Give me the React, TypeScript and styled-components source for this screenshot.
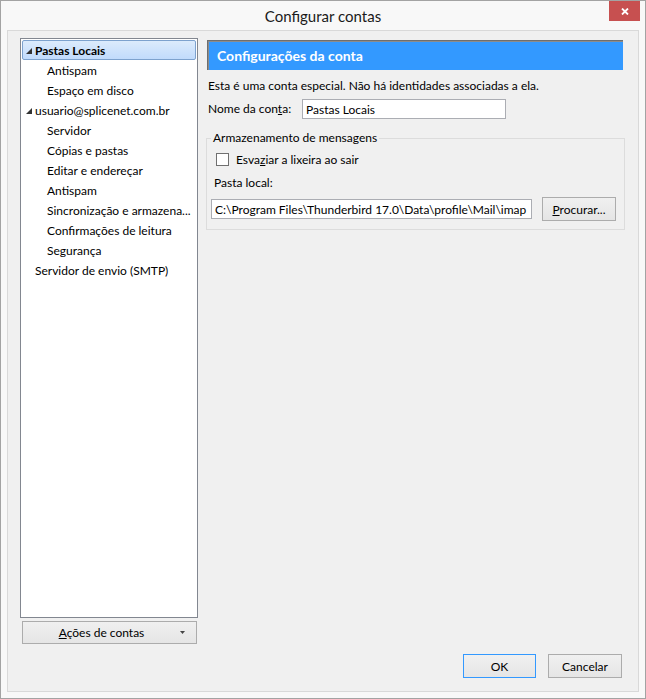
import React from "react";
import styled, { createGlobalStyle } from "styled-components";

const GlobalStyle = createGlobalStyle`
  html, body { margin: 0; padding: 0; background: #ffffff; }
  body { font-family: Lato, "Noto Sans", sans-serif; font-size: 12px; color: #000; }
  * { box-sizing: border-box; }
`;

const Window = styled.div`
  width: 646px;
  height: 699px;
  border: 1px solid #a3a3a3;
  background: #f8f8f8;
  display: flex;
  flex-direction: column;
  padding: 0 6px 6px 6px;
`;

const TitleBar = styled.div`
  height: 29px;
  flex: none;
  display: grid;
  grid-template-columns: 1fr auto 1fr;
  align-items: center;
`;

const Title = styled.div`
  grid-column: 2;
  font-size: 15px;
  line-height: 20px;
  color: #1a1a1a;
`;

const CloseButton = styled.div`
  grid-column: 3;
  justify-self: end;
  align-self: start;
  width: 31px;
  height: 20px;
  margin-right: -1px;
  background: #c75050;
  display: flex;
  justify-content: center;
  padding-top: 7px;
`;

const Frame = styled.div`
  flex: 1;
  border: 1px solid #d9d9d9;
  background: #f0f0f0;
  display: grid;
  grid-template-columns: 178px 1fr;
  column-gap: 8px;
  padding: 7px 13px 13px 12px;
  min-height: 0;
`;

const LeftColumn = styled.div`
  display: flex;
  flex-direction: column;
  min-height: 0;
`;

const Tree = styled.div`
  flex: 1;
  border: 1px solid #828790;
  background: #fff;
  padding: 1px;
`;

const TreeRow = styled.div<{ $level: number; $selected?: boolean }>`
  height: 20px;
  border: 1px solid ${(p) => (p.$selected ? "#7da2ce" : "transparent")};
  border-radius: 2px;
  background: ${(p) => (p.$selected ? "linear-gradient(#dcebfc, #c1dbfc)" : "transparent")};
  font-weight: ${(p) => (p.$selected ? 700 : 400)};
  display: flex;
  align-items: center;
  padding-left: ${(p) => 3 + p.$level * 12}px;
  white-space: nowrap;
`;

const Expander = styled.span`
  width: 9px;
  flex: none;
  display: flex;
  align-items: center;
  padding-top: 1px;
`;

const DropButton = styled.button`
  height: 23px;
  margin: 3px 1px 34px 2px;
  padding: 0 11px 0 0;
  font: inherit;
  color: #000;
  border: 1px solid #acacac;
  background: linear-gradient(#f0f0f0, #e5e5e5);
  display: flex;
  align-items: center;
`;

const DropLabel = styled.span`
  flex: 1;
  text-align: center;
`;

const RightColumn = styled.div`
  display: flex;
  flex-direction: column;
  min-width: 0;
`;

const Header = styled.div`
  margin: 2px 2px 0 1px;
  height: 30px;
  flex: none;
  background: #3399ff;
  border-top: 1px solid #6e6e6e;
  border-left: 1px solid #6e6e6e;
  box-shadow: inset 1px 1px 0 #8c8c8c;
  color: #fff;
  font-weight: 700;
  font-size: 14px;
  display: flex;
  align-items: center;
  padding-left: 9px;
`;

const Description = styled.div`
  margin-top: 8px;
  padding-left: 2px;
  line-height: 16px;
`;

const NameRow = styled.div`
  margin-top: 5px;
  padding-left: 2px;
  display: flex;
  align-items: center;
`;

const FieldLabel = styled.span<{ $width?: number }>`
  width: ${(p) => (p.$width ? `${p.$width}px` : "auto")};
  flex: none;
  line-height: 16px;
`;

const TextInput = styled.input<{ $width?: number }>`
  width: ${(p) => (p.$width ? `${p.$width}px` : "auto")};
  flex: ${(p) => (p.$width ? "none" : "1")};
  min-width: 0;
  height: 20px;
  border: 1px solid #abadb3;
  background: #fff;
  padding: 0 3px;
  font: inherit;
  color: #000;
  outline: none;
`;

const GroupBox = styled.fieldset`
  margin: 11px 0 0 0;
  padding: 0 8px 8px 4px;
  border: 1px solid #dcdcdc;
  min-width: 0;
`;

const Legend = styled.legend`
  padding: 0 2px;
  line-height: 16px;
  font-size: 12px;
`;

const CheckRow = styled.label`
  margin-top: 5px;
  padding-left: 5px;
  height: 16px;
  display: flex;
  align-items: center;
  gap: 7px;
`;

const CheckBox = styled.span`
  width: 13px;
  height: 13px;
  flex: none;
  border: 1px solid #707070;
  background: #fff;
`;

const SubLabel = styled.div`
  margin-top: 8px;
  padding-left: 3px;
  line-height: 16px;
`;

const PathRow = styled.div`
  margin-top: 6px;
  display: flex;
  align-items: center;
  gap: 10px;
`;

const Button = styled.button<{ $width: number; $default?: boolean }>`
  width: ${(p) => p.$width}px;
  height: 24px;
  flex: none;
  padding: 0;
  font: inherit;
  color: #000;
  border: 1px solid ${(p) => (p.$default ? "#3399ff" : "#acacac")};
  background: linear-gradient(#f0f0f0, #e5e5e5);
`;

const Spacer = styled.div`
  flex: 1;
`;

const ButtonRow = styled.div`
  display: flex;
  justify-content: flex-end;
  gap: 12px;
  margin-right: 3px;
`;

type Row = { label: string; level: number; expander?: boolean; selected?: boolean };

const rows: Row[] = [
  { label: "Pastas Locais", level: 0, expander: true, selected: true },
  { label: "Antispam", level: 1 },
  { label: "Espaço em disco", level: 1 },
  { label: "usuario@splicenet.com.br", level: 0, expander: true },
  { label: "Servidor", level: 1 },
  { label: "Cópias e pastas", level: 1 },
  { label: "Editar e endereçar", level: 1 },
  { label: "Antispam", level: 1 },
  { label: "Sincronização e armazena...", level: 1 },
  { label: "Confirmações de leitura", level: 1 },
  { label: "Segurança", level: 1 },
  { label: "Servidor de envio (SMTP)", level: 0 },
];

const Triangle = () => (
  <svg width="6" height="6" viewBox="0 0 6 6">
    <path d="M6 0 L6 6 L0 6 Z" fill="#333" />
  </svg>
);

export default function App() {
  return (
    <>
      <GlobalStyle />
      <Window>
        <TitleBar>
          <Title>Configurar contas</Title>
          <CloseButton>
            <svg width="8" height="7" viewBox="0 0 8 7">
              <path d="M1 0.5 L7 6.5 M7 0.5 L1 6.5" stroke="#fff" strokeWidth="1.8" />
            </svg>
          </CloseButton>
        </TitleBar>
        <Frame>
          <LeftColumn>
            <Tree>
              {rows.map((r, i) => (
                <TreeRow key={i} $level={r.level} $selected={r.selected}>
                  <Expander>{r.expander ? <Triangle /> : null}</Expander>
                  {r.label}
                </TreeRow>
              ))}
            </Tree>
            <DropButton>
              <DropLabel>
                <u>A</u>ções de contas
              </DropLabel>
              <svg width="5" height="3" viewBox="0 0 5 3">
                <path d="M0 0 L5 0 L2.5 3 Z" fill="#444" />
              </svg>
            </DropButton>
          </LeftColumn>
          <RightColumn>
            <Header>Configurações da conta</Header>
            <Description>Esta é uma conta especial. Não há identidades associadas a ela.</Description>
            <NameRow>
              <FieldLabel $width={94}>
                Nome da con<u>t</u>a:
              </FieldLabel>
              <TextInput $width={204} defaultValue="Pastas Locais" />
            </NameRow>
            <GroupBox>
              <Legend>Armazenamento de mensagens</Legend>
              <CheckRow>
                <CheckBox />
                <span>
                  Esva<u>z</u>iar a lixeira ao sair
                </span>
              </CheckRow>
              <SubLabel>Pasta local:</SubLabel>
              <PathRow>
                <TextInput defaultValue="C:\Program Files\Thunderbird 17.0\Data\profile\Mail\imap" />
                <Button $width={74}>
                  <u>P</u>rocurar...
                </Button>
              </PathRow>
            </GroupBox>
            <Spacer />
            <ButtonRow>
              <Button $width={73} $default>
                OK
              </Button>
              <Button $width={74}>Cancelar</Button>
            </ButtonRow>
          </RightColumn>
        </Frame>
      </Window>
    </>
  );
}
